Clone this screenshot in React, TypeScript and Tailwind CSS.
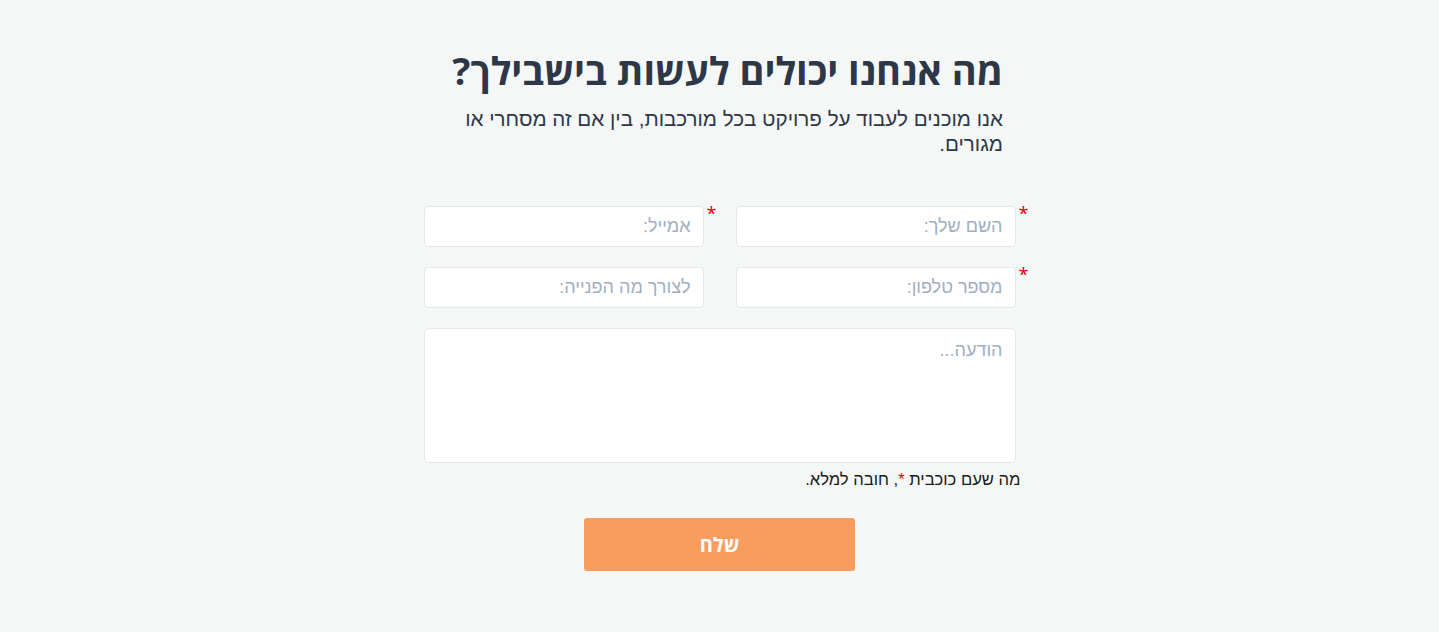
import { useState } from "react";

const inputClass =
  "w-full h-[41px] rounded border border-[#e2e8f0] bg-white px-3 font-['Liberation_Sans',sans-serif] text-[18px] text-[#2d3748] placeholder:text-[#a0aec0] outline-none";

function Field({
  placeholder,
  required,
  value,
  onChange,
}: {
  placeholder: string;
  required?: boolean;
  value: string;
  onChange: (v: string) => void;
}) {
  return (
    <div className="relative w-[280px]">
      {required && (
        <span className="absolute -right-[13px] -top-[2px] text-[18px] leading-none text-[#e00000]">
          *
        </span>
      )}
      <input
        className={inputClass}
        placeholder={placeholder}
        value={value}
        onChange={(e) => onChange(e.target.value)}
      />
    </div>
  );
}

export default function App() {
  const [form, setForm] = useState({
    name: "",
    email: "",
    phone: "",
    subject: "",
    message: "",
  });

  const update = (key: keyof typeof form) => (v: string) =>
    setForm({ ...form, [key]: v });

  return (
    <div
      dir="rtl"
      className="min-h-[632px] bg-[#f5f7f7] flex flex-col items-center pt-[42px] font-['Open_Sans','DejaVu_Sans',sans-serif]"
    >
      {/* Heading */}
      <div className="w-[567px] text-[#2d3748]">
        <h1 className="text-[38px] font-bold leading-[56px]">
          מה אנחנו יכולים לעשות בישבילך?
        </h1>
        <p className="mt-[8px] font-['Liberation_Sans',sans-serif] text-[20.6px] leading-[25px]">
          אנו מוכנים לעבוד על פרויקט בכל מורכבות, בין אם זה מסחרי או מגורים.
        </p>
      </div>

      {/* Form */}
      <form
        className="mt-[50px] w-[592px] flex flex-col"
        onSubmit={(e) => e.preventDefault()}
      >
        <div className="grid grid-cols-2 gap-x-[32px] gap-y-[20px]">
          <Field
            placeholder="השם שלך:"
            required
            value={form.name}
            onChange={update("name")}
          />
          <Field
            placeholder="אמייל:"
            required
            value={form.email}
            onChange={update("email")}
          />
          <Field
            placeholder="מספר טלפון:"
            required
            value={form.phone}
            onChange={update("phone")}
          />
          <Field
            placeholder="לצורך מה הפנייה:"
            value={form.subject}
            onChange={update("subject")}
          />
        </div>

        <textarea
          className="mt-[20px] h-[135px] w-full resize-none rounded border border-[#e2e8f0] bg-white px-3 py-[8px] font-['Liberation_Sans',sans-serif] text-[18px] text-[#2d3748] placeholder:text-[#a0aec0] outline-none"
          placeholder="הודעה..."
          value={form.message}
          onChange={(e) => update("message")(e.target.value)}
        />

        <p className="mt-[5px] -mr-[5px] font-['Liberation_Sans',sans-serif] text-[16.6px] leading-[24px] text-[#1a1a1a]">
          מה שעם כוכבית <span className="text-[#e00000]">*</span>, חובה למלא.
        </p>

        <div className="mt-[26px] flex justify-center">
          <button
            type="submit"
            className="h-[53px] w-[271px] rounded-[3px] bg-[#f99d5f] text-[20px] font-bold text-white"
          >
            שלח
          </button>
        </div>
      </form>
    </div>
  );
}
